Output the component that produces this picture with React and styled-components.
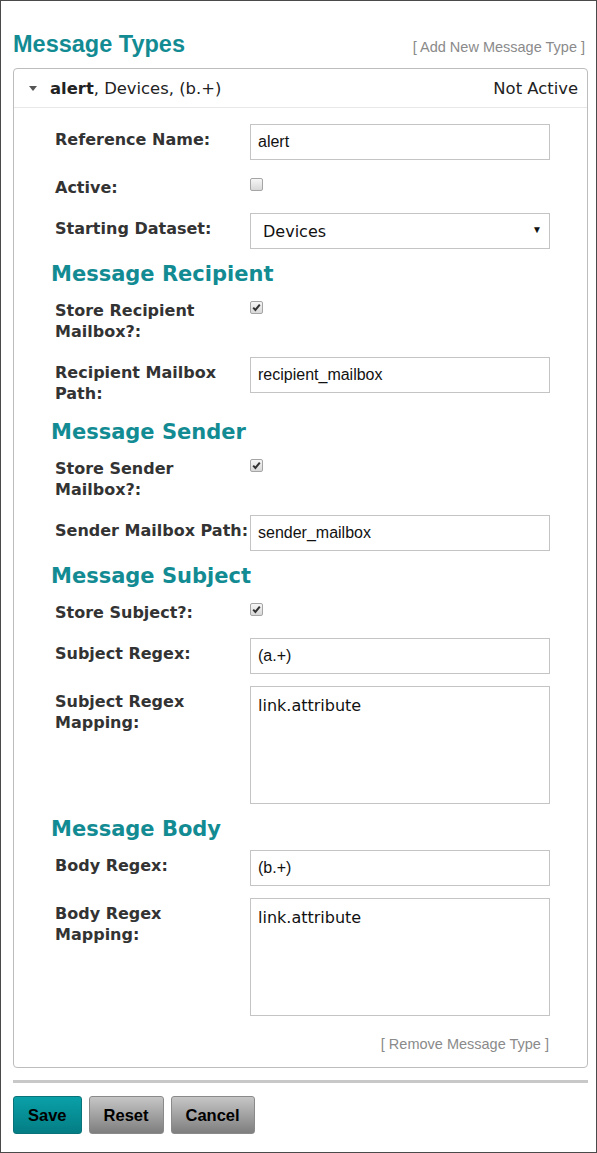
import React from "react";
import styled, { createGlobalStyle } from "styled-components";

const GlobalStyle = createGlobalStyle`
  html, body {
    margin: 0;
    padding: 0;
    background: #fff;
  }
  * {
    box-sizing: border-box;
  }
`;

const sections = [
  {
    title: "Message Recipient",
    fields: [
      { label: "Store Recipient Mailbox?:", type: "check", checked: true },
      { label: "Recipient Mailbox Path:", type: "text", value: "recipient_mailbox" },
    ],
  },
  {
    title: "Message Sender",
    fields: [
      { label: "Store Sender Mailbox?:", type: "check", checked: true },
      { label: "Sender Mailbox Path:", type: "text", value: "sender_mailbox" },
    ],
  },
  {
    title: "Message Subject",
    fields: [
      { label: "Store Subject?:", type: "check", checked: true },
      { label: "Subject Regex:", type: "text", value: "(a.+)" },
      { label: "Subject Regex Mapping:", type: "area", value: "link.attribute" },
    ],
  },
  {
    title: "Message Body",
    fields: [
      { label: "Body Regex:", type: "text", value: "(b.+)" },
      { label: "Body Regex Mapping:", type: "area", value: "link.attribute" },
    ],
  },
];

const Checkbox = ({ checked }) => (
  <CheckBox role="checkbox" aria-checked={checked}>
    {checked && (
      <svg width="9" height="9" viewBox="0 0 9 9">
        <path d="M1.2 4.6 L3.4 7 L7.8 1.6" fill="none" stroke="#333" strokeWidth="2" />
      </svg>
    )}
  </CheckBox>
);

const renderControl = (field) => {
  if (field.type === "check") return <Checkbox checked={field.checked} />;
  if (field.type === "area") return <TextArea defaultValue={field.value} />;
  return <TextInput defaultValue={field.value} />;
};

const App = () => {
  return (
    <>
      <GlobalStyle />
      <Page>
        <TitleBar>
          <Title>Message Types</Title>
          <SmallLink>[ Add New Message Type ]</SmallLink>
        </TitleBar>

        <Panel>
          <PanelHeader>
            <HeaderLeft>
              <Caret />
              <span>
                <b>alert</b>, Devices, (b.+)
              </span>
            </HeaderLeft>
            <span>Not Active</span>
          </PanelHeader>

          <Form>
            <Row>
              <Label>Reference Name:</Label>
              <TextInput defaultValue="alert" />
            </Row>
            <Row>
              <Label>Active:</Label>
              <Checkbox checked={false} />
            </Row>
            <Row>
              <Label>Starting Dataset:</Label>
              <SelectWrap>
                <Select defaultValue="Devices">
                  <option>Devices</option>
                </Select>
                <Arrow>▼</Arrow>
              </SelectWrap>
            </Row>

            {sections.map((section) => (
              <React.Fragment key={section.title}>
                <SectionTitle>{section.title}</SectionTitle>
                {section.fields.map((field) => (
                  <Row key={field.label}>
                    <Label>{field.label}</Label>
                    {renderControl(field)}
                  </Row>
                ))}
              </React.Fragment>
            ))}

            <RemoveRow>
              <SmallLink>[ Remove Message Type ]</SmallLink>
            </RemoveRow>
          </Form>
        </Panel>

        <Divider />

        <Buttons>
          <Button $primary>Save</Button>
          <Button>Reset</Button>
          <Button>Cancel</Button>
        </Buttons>
      </Page>
    </>
  );
};

const Page = styled.div`
  min-height: 100vh;
  border: 1px solid #4a4a4a;
  padding: 29px 8px 0 12px;
`;

const TitleBar = styled.div`
  display: flex;
  justify-content: space-between;
  align-items: baseline;
  margin-bottom: 10px;
`;

const Title = styled.h1`
  margin: 0;
  font-family: "Liberation Sans", Arial, sans-serif;
  font-size: 23.5px;
  line-height: 28px;
  font-weight: bold;
  color: #128b93;
`;

const SmallLink = styled.span`
  font-family: "Liberation Sans", Arial, sans-serif;
  font-size: 14.5px;
  color: #8a8a8a;
  margin-right: 3px;
  cursor: pointer;
`;

const Panel = styled.div`
  border: 1px solid #bdbdbd;
  border-radius: 4px;
`;

const PanelHeader = styled.div`
  height: 39px;
  display: flex;
  align-items: center;
  justify-content: space-between;
  padding: 0 9px 0 15px;
  border-bottom: 1px solid #e8e8e8;
  font-family: "DejaVu Sans", Tahoma, sans-serif;
  font-size: 16.4px;
  color: #222;
`;

const HeaderLeft = styled.div`
  display: flex;
  align-items: center;
  gap: 13px;
`;

const Caret = styled.span`
  width: 0;
  height: 0;
  border-left: 4px solid transparent;
  border-right: 4px solid transparent;
  border-top: 5px solid #555;
`;

const Form = styled.div`
  padding: 16px 36px 15px 41px;
`;

const Row = styled.div`
  display: grid;
  grid-template-columns: 195px 300px;
  align-items: start;
  margin-bottom: 12px;
`;

const Label = styled.div`
  padding: 5px 0 3px;
  font-family: "DejaVu Sans", Tahoma, sans-serif;
  font-size: 16px;
  line-height: 21px;
  font-weight: bold;
  color: #333;
`;

const SectionTitle = styled.h2`
  margin: 0 0 8px -4px;
  font-family: "DejaVu Sans", Tahoma, sans-serif;
  font-size: 21px;
  line-height: 26px;
  font-weight: bold;
  color: #128b93;
`;

const TextInput = styled.input`
  width: 300px;
  height: 36px;
  border: 1px solid #c4c4c4;
  padding: 0 7px;
  font-family: "Liberation Sans", Arial, sans-serif;
  font-size: 16px;
  color: #111;
  outline: none;
`;

const TextArea = styled.textarea`
  width: 300px;
  height: 118px;
  border: 1px solid #c4c4c4;
  padding: 9px 7px;
  font-family: "DejaVu Sans", Tahoma, sans-serif;
  font-size: 16px;
  color: #111;
  resize: none;
  outline: none;
`;

const SelectWrap = styled.div`
  position: relative;
  width: 300px;
`;

const Select = styled.select`
  appearance: none;
  width: 300px;
  height: 36px;
  border: 1px solid #c4c4c4;
  border-radius: 0;
  background: #fff;
  padding: 0 12px;
  font-family: "DejaVu Sans", Tahoma, sans-serif;
  font-size: 16px;
  color: #111;
  outline: none;
`;

const Arrow = styled.span`
  position: absolute;
  right: 8px;
  top: 11px;
  font-size: 10px;
  color: #111;
  pointer-events: none;
`;

const CheckBox = styled.span`
  margin-top: 6px;
  width: 13px;
  height: 13px;
  display: flex;
  align-items: center;
  justify-content: center;
  border: 1px solid #a5a5a5;
  border-radius: 2px;
  background: linear-gradient(#f6f6f6, #d8d8d8);
`;

const RemoveRow = styled.div`
  display: flex;
  justify-content: flex-end;
  padding: 8px 0 0;
  width: 495px;
  line-height: 16px;

  ${SmallLink} {
    margin-right: 1px;
  }
`;

const Divider = styled.div`
  height: 3px;
  background: #c8c8c8;
  margin: 12px 0 13px;
`;

const Buttons = styled.div`
  display: flex;
  gap: 7px;
`;

const Button = styled.button`
  height: 38px;
  padding: 0 14px;
  border-radius: 3px;
  border: 1px solid ${(p) => (p.$primary ? "#0a737a" : "#8a8a8a")};
  background: ${(p) =>
    p.$primary
      ? "linear-gradient(#0aa0a8, #047d84)"
      : "linear-gradient(#c6c6c6, #7e7e7e)"};
  font-family: "Liberation Sans", Arial, sans-serif;
  font-size: 16.5px;
  font-weight: bold;
  color: #000;
  cursor: pointer;
`;

export default App;
